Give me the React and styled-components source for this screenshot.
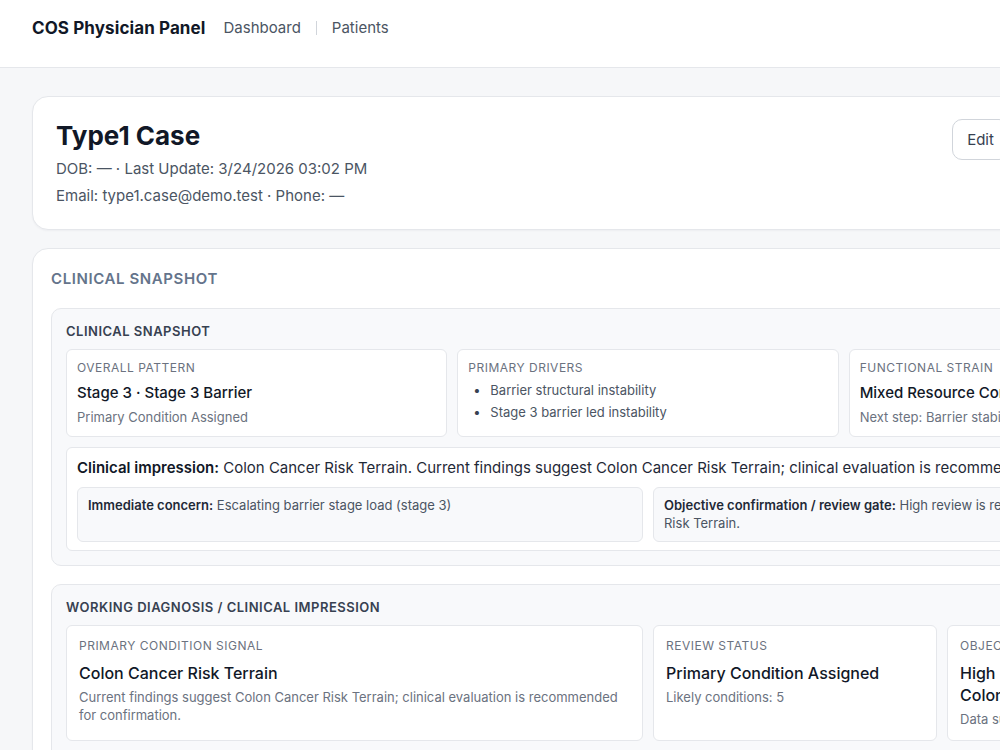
import React from "react";
import styled, { createGlobalStyle } from "styled-components";

const GlobalStyle = createGlobalStyle`
  html, body {
    margin: 0;
    padding: 0;
    overflow: hidden;
    background: #f6f7f9;
  }
  body {
    font-family: Inter, "Noto Sans", "Liberation Sans", sans-serif;
    color: #111827;
    -webkit-font-smoothing: antialiased;
  }
  * {
    box-sizing: border-box;
  }
`;

const Shell = styled.div`
  width: 1296px;
  min-height: 750px;
  background: #f6f7f9;
`;

const TopBar = styled.header`
  height: 68px;
  display: flex;
  align-items: flex-start;
  gap: 18px;
  padding: 18px 32px 0;
  background: #ffffff;
  border-bottom: 1px solid #e5e7eb;
  line-height: 20px;
`;

const Brand = styled.div`
  font-size: 17px;
  font-weight: 700;
  color: #111827;
  letter-spacing: 0.1px;
`;

const Nav = styled.nav`
  display: flex;
  align-items: center;
  gap: 15px;
  height: 20px;
  font-size: 15px;
  color: #4b5563;
`;

const NavSep = styled.span`
  width: 1px;
  height: 14px;
  background: #d1d5db;
`;

const Main = styled.main`
  display: flex;
  flex-direction: column;
  gap: 18px;
  padding: 28px 32px;
`;

const Card = styled.section`
  background: #ffffff;
  border: 1px solid #e5e7eb;
  border-radius: 16px;
  padding: ${(p) => p.$pad || "20px 18px"};
  box-shadow: 0 1px 2px rgba(15, 23, 42, 0.04);
`;

const PatientHead = styled.div`
  display: flex;
  justify-content: space-between;
  align-items: flex-start;
`;

const PatientName = styled.h1`
  margin: 0 0 2px;
  font-size: 26px;
  line-height: 34px;
  font-weight: 700;
  color: #111827;
`;

const Meta = styled.div`
  font-size: 15px;
  line-height: 27px;
  color: #4b5563;
`;

const Actions = styled.div`
  display: flex;
  gap: 15px;
`;

const Button = styled.button`
  height: 41px;
  padding: 0 14px;
  border: 1px solid #d1d5db;
  border-radius: 10px;
  background: #ffffff;
  font-family: inherit;
  font-size: 15px;
  color: #374151;
`;

const CardTitle = styled.h2`
  margin: 0 0 19px;
  font-size: 15px;
  line-height: 20px;
  font-weight: 600;
  letter-spacing: 0.6px;
  text-transform: uppercase;
  color: #64748b;
`;

const Stack = styled.div`
  display: flex;
  flex-direction: column;
  gap: 18px;
`;

const Section = styled.div`
  background: #f8f9fb;
  border: 1px solid #e5e7eb;
  border-radius: 10px;
  padding: 14px;
`;

const SectionTitle = styled.h3`
  margin: 0 0 10px;
  font-size: 13px;
  line-height: 16px;
  font-weight: 600;
  letter-spacing: 0.5px;
  text-transform: uppercase;
  color: #374151;
`;

const Grid = styled.div`
  display: grid;
  grid-template-columns: ${(p) => p.$cols};
  gap: ${(p) => p.$gap || "10px"};
  margin-top: ${(p) => p.$top || "0"};
`;

const Tile = styled.div`
  background: #ffffff;
  border: 1px solid #e5e7eb;
  border-radius: 6px;
  padding: ${(p) => (p.$roomy ? "12px" : "10px")};
  min-width: 0;
`;

const Label = styled.div`
  font-size: 12px;
  line-height: 16px;
  letter-spacing: 0.5px;
  text-transform: uppercase;
  color: #6b7280;
`;

const Value = styled.div`
  margin-top: ${(p) => (p.$big ? "8px" : "7px")};
  font-size: ${(p) => (p.$big ? "16px" : "15px")};
  line-height: ${(p) => (p.$big ? "22px" : "20px")};
  font-weight: 500;
  color: #111827;
  white-space: ${(p) => (p.$nowrap ? "nowrap" : "normal")};
`;

const Sub = styled.div`
  margin-top: ${(p) => (p.$big ? "4px" : "5px")};
  font-size: 13px;
  line-height: 18px;
  color: #6b7280;
  white-space: ${(p) => (p.$nowrap ? "nowrap" : "normal")};
`;

const Bullets = styled.ul`
  margin: 3px 0 0;
  padding-left: 5px;
  list-style: none;
  font-size: 13px;
  line-height: 22px;
  color: #4b5563;
  li::before {
    content: "•";
    display: inline-block;
    width: 17px;
    color: #374151;
  }
`;

const Impression = styled.div`
  margin-top: 10px;
  background: #ffffff;
  border: 1px solid #e5e7eb;
  border-radius: 6px;
  padding: 9px 10px 8px;
`;

const ImpressionText = styled.div`
  font-size: 15px;
  line-height: 22px;
  color: #1f2937;
  white-space: nowrap;
  b {
    font-weight: 600;
    color: #111827;
  }
`;

const Note = styled.div`
  background: #f8f9fb;
  border: 1px solid #e5e7eb;
  border-radius: 6px;
  padding: 8px 10px 9px;
  font-size: 13px;
  line-height: 18px;
  color: #4b5563;
  b {
    font-weight: 600;
    color: #1f2937;
  }
`;

const snapshot = [
  {
    label: "Overall Pattern",
    value: "Stage 3 · Stage 3 Barrier",
    sub: "Primary Condition Assigned",
  },
  {
    label: "Primary Drivers",
    list: ["Barrier structural instability", "Stage 3 barrier led instability"],
  },
  {
    label: "Functional Strain",
    value: "Mixed Resource Constraint",
    sub: "Next step: Barrier stabilization and resource support",
  },
];

const diagnosis = [
  {
    label: "Primary Condition Signal",
    value: "Colon Cancer Risk Terrain",
    sub: "Current findings suggest Colon Cancer Risk Terrain; clinical evaluation is recommended for confirmation.",
  },
  {
    label: "Review Status",
    value: "Primary Condition Assigned",
    sub: "Likely conditions: 5",
  },
  {
    label: "Objective Confirmation",
    value: "High risk confirmation needed Colon Cancer Risk Terrain",
    sub: "Data support: moderate",
  },
];

const extra = [
  { label: "Stage", value: "Stage 3" },
  { label: "Barrier", value: "Stage 3 Barrier" },
  { label: "Resource", value: "Mixed" },
  { label: "Likely", value: "5 conditions" },
];

const App = () => {
  return (
    <Shell>
      <GlobalStyle />
      <TopBar>
        <Brand>COS Physician Panel</Brand>
        <Nav>
          <span>Dashboard</span>
          <NavSep />
          <span>Patients</span>
        </Nav>
      </TopBar>
      <Main>
        <Card $pad="22px 23px 20px">
          <PatientHead>
            <div>
              <PatientName>Type1 Case</PatientName>
              <Meta>DOB: — · Last Update: 3/24/2026 03:02 PM</Meta>
              <Meta>Email: type1.case@demo.test · Phone: —</Meta>
            </div>
            <Actions>
              <Button>Edit</Button>
              <Button>Print Report</Button>
              <Button>Patients</Button>
            </Actions>
          </PatientHead>
        </Card>

        <Card>
          <CardTitle>Clinical Snapshot</CardTitle>
          <Stack>
            <Section>
              <SectionTitle>Clinical Snapshot</SectionTitle>
              <Grid $cols="repeat(3, minmax(0, 1fr))">
                {snapshot.map((item) => (
                  <Tile key={item.label}>
                    <Label>{item.label}</Label>
                    {item.list ? (
                      <Bullets>
                        {item.list.map((li) => (
                          <li key={li}>{li}</li>
                        ))}
                      </Bullets>
                    ) : (
                      <>
                        <Value $nowrap>{item.value}</Value>
                        <Sub $nowrap>{item.sub}</Sub>
                      </>
                    )}
                  </Tile>
                ))}
              </Grid>
              <Impression>
                <ImpressionText>
                  <b>Clinical impression:</b> Colon Cancer Risk Terrain. Current
                  findings suggest Colon Cancer Risk Terrain; clinical evaluation
                  is recommended for confirmation.
                </ImpressionText>
                <Grid $cols="repeat(2, minmax(0, 1fr))" $top="8px">
                  <Note>
                    <b>Immediate concern:</b> Escalating barrier stage load (stage
                    3)
                  </Note>
                  <Note>
                    <b>Objective confirmation / review gate:</b> High review is
                    required to confirm Colon Cancer Risk Terrain.
                  </Note>
                </Grid>
              </Impression>
            </Section>

            <Section>
              <SectionTitle>Working Diagnosis / Clinical Impression</SectionTitle>
              <Grid $cols="577px 284px minmax(0, 1fr)">
                {diagnosis.map((item) => (
                  <Tile key={item.label} $roomy>
                    <Label>{item.label}</Label>
                    <Value $big>{item.value}</Value>
                    <Sub $big>{item.sub}</Sub>
                  </Tile>
                ))}
              </Grid>
              <Grid $cols="repeat(4, minmax(0, 1fr))" $gap="15px" $top="9px">
                {extra.map((item) => (
                  <Tile key={item.label} $roomy>
                    <Label>{item.label}</Label>
                    <Value $big>{item.value}</Value>
                  </Tile>
                ))}
              </Grid>
            </Section>
          </Stack>
        </Card>
      </Main>
    </Shell>
  );
};

export default App;
